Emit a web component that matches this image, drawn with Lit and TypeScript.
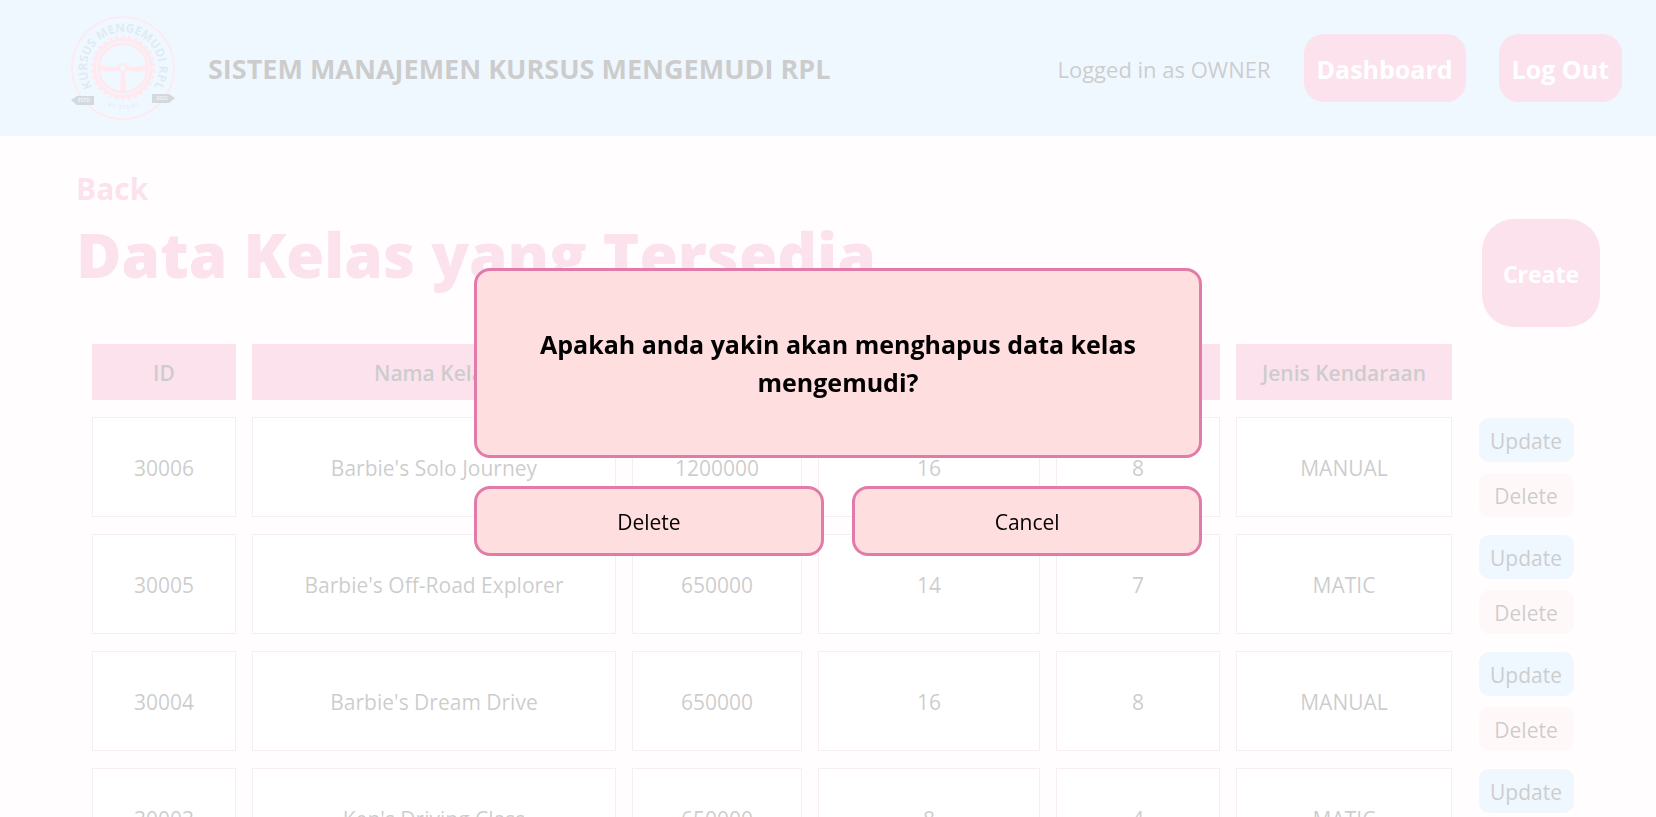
import { LitElement, html, css, svg } from "lit";
import { customElement, property } from "lit/decorators.js";

interface Kelas {
  id: number;
  nama: string;
  harga: number;
  jam: number;
  pertemuan: number;
  jenis: string;
}

const DAFTAR_KELAS: Kelas[] = [
  { id: 30006, nama: "Barbie's Solo Journey", harga: 1200000, jam: 16, pertemuan: 8, jenis: "MANUAL" },
  { id: 30005, nama: "Barbie's Off-Road Explorer", harga: 650000, jam: 14, pertemuan: 7, jenis: "MATIC" },
  { id: 30004, nama: "Barbie's Dream Drive", harga: 650000, jam: 16, pertemuan: 8, jenis: "MANUAL" },
  { id: 30003, nama: "Ken's Driving Class", harga: 650000, jam: 8, pertemuan: 4, jenis: "MATIC" },
];

const GERIGI = Array.from({ length: 30 }, (_, i) => i * 12);

@customElement("kursus-logo")
export class KursusLogo extends LitElement {
  static styles = css`
    :host { display: block; width: 104px; height: 104px; flex: none; }
    .logo { display: block; width: 100%; height: 100%; overflow: visible; }
    .ring { fill: none; stroke: #ff8fb0; }
    .solid { fill: #ff8fb0; }
    .name { font: 700 12px "Open Sans", sans-serif; fill: #5a9cbc; }
    .small { font: 600 5px "Open Sans", sans-serif; fill: #5a9cbc; }
    .flag { fill: #303c58; }
    .flag-text { font: 700 5px "Open Sans", sans-serif; fill: #afc3e0; text-anchor: middle; }
  `;

  render() {
    return html`
      <svg class="logo" viewBox="-52 -52 104 104" role="img" aria-label="Kursus Mengemudi RPL">
        <defs>
          <path id="top" d="M-31.8 16.9 A36 36 0 1 1 31.8 16.9" />
          <path id="bottom" d="M-30 28 A41 41 0 0 0 30 28" />
        </defs>
        <circle class="ring" r="51" stroke-width="1.6" />
        ${GERIGI.map((a) => svg`<rect class="solid" x="-1.6" y="-32.5" width="3.2" height="5" rx="1" transform="rotate(${a})" />`)}
        <circle class="ring" r="28.4" stroke-width="3" />
        <circle class="ring" r="24.4" stroke-width="2.8" />
        <circle class="ring" r="4" stroke-width="2.4" />
        <path class="solid" d="M-24 -4 Q-14 1 -4 -2 V2 Q-12 5 -24 2 Z M24 -4 Q14 1 4 -2 V2 Q12 5 24 2 Z M-2 4 H2 L3 24 H-3 Z" />
        <text class="name"><textPath href="#top" startOffset="50%" text-anchor="middle">KURSUS MENGEMUDI RPL</textPath></text>
        <text class="small"><textPath href="#bottom" startOffset="50%" text-anchor="middle">B Y ' S T E M I</textPath></text>
        <path class="flag" d="M-52 32 L-46 28 H-29 V37 H-46 Z" />
        <path class="flag" d="M52 30 L46 26 H29 V35 H46 Z" />
        <text class="flag-text" x="-39" y="34">ESTD</text>
        <text class="flag-text" x="39" y="32">2023</text>
      </svg>
    `;
  }
}

@customElement("site-header")
export class SiteHeader extends LitElement {
  @property() peran = "OWNER";

  static styles = css`
    :host { display: block; }
    .bar { display: flex; align-items: center; gap: 33px; min-height: 136px; padding: 0 34px 0 71px; background: #afd7ff; box-sizing: border-box; }
    .title { margin: 0; padding-top: 2px; font-size: 27px; font-weight: 700; line-height: 36px; }
    .who { margin-left: auto; padding-top: 2px; font-size: 22px; line-height: 30px; }
    .pill { height: 68px; padding: 2px 13px 0; border: 0; border-radius: 20px; background: #eb6ea5; color: #fff; font: inherit; font-size: 25px; font-weight: 700; }
  `;

  render() {
    return html`
      <header class="bar">
        <kursus-logo></kursus-logo>
        <h2 class="title">SISTEM MANAJEMEN KURSUS MENGEMUDI RPL</h2>
        <span class="who">Logged in as ${this.peran}</span>
        <button class="pill" type="button">Dashboard</button>
        <button class="pill" type="button">Log Out</button>
      </header>
    `;
  }
}

@customElement("kelas-table")
export class KelasTable extends LitElement {
  @property({ attribute: false }) rows: Kelas[] = [];

  static styles = css`
    :host { display: block; }
    .grid { width: 100%; table-layout: fixed; border-collapse: separate; border-spacing: 16px 17px; font-size: 21px; line-height: 28px; }
    .c-id { width: 144px; }
    .c-nama { width: 364px; }
    .c-harga { width: 170px; }
    .c-jam { width: 222px; }
    .c-temu { width: 164px; }
    .c-jenis { width: 216px; }
    .c-aksi { width: 116px; }
    .head { height: 56px; padding: 2px 0 0; box-sizing: border-box; background: #eb6ea5; font-weight: 600; }
    .cell { height: 100px; padding: 2px 0 0; box-sizing: border-box; border: 1px solid #d2aac3; background: #fff; text-align: center; }
    .aksi { padding: 0; }
    .stack { display: flex; flex-direction: column; align-items: center; gap: 11px; }
    .act { width: 95px; height: 44px; padding: 2px 0 0; border: 0; border-radius: 10px; font: inherit; color: #000; }
    .update { background: #afd7ff; }
    .delete { background: #ffdddd; }
  `;

  render() {
    return html`
      <table class="grid">
        <colgroup>
          <col class="c-id" /><col class="c-nama" /><col class="c-harga" /><col class="c-jam" />
          <col class="c-temu" /><col class="c-jenis" /><col class="c-aksi" />
        </colgroup>
        <thead>
          <tr>
            <th class="head">ID</th>
            <th class="head">Nama Kelas</th>
            <th class="head"></th>
            <th class="head"></th>
            <th class="head"></th>
            <th class="head">Jenis Kendaraan</th>
            <td></td>
          </tr>
        </thead>
        <tbody>
          ${this.rows.map(
            (k) => html`
              <tr>
                <td class="cell">${k.id}</td>
                <td class="cell">${k.nama}</td>
                <td class="cell">${k.harga}</td>
                <td class="cell">${k.jam}</td>
                <td class="cell">${k.pertemuan}</td>
                <td class="cell">${k.jenis}</td>
                <td class="aksi">
                  <div class="stack">
                    <button class="act update" type="button">Update</button>
                    <button class="act delete" type="button">Delete</button>
                  </div>
                </td>
              </tr>
            `,
          )}
        </tbody>
      </table>
    `;
  }
}

@customElement("confirm-dialog")
export class ConfirmDialog extends LitElement {
  static styles = css`
    :host { position: fixed; inset: 0; display: flex; align-items: center; justify-content: center; padding: 7px 0 0 20px; box-sizing: border-box; background: rgba(255, 255, 255, 0.8); }
    .dialog { display: grid; grid-template-columns: 1fr 1fr; gap: 28px; width: 44vw; }
    .message { grid-column: 1 / -1; margin: 0; padding: 54px 48px; border: 3px solid #e37ba9; border-radius: 16px; background: #ffdedf; text-align: center; font-size: 25px; font-weight: 700; line-height: 38px; }
    .choice { height: 70px; padding: 2px 0 0; border: 3px solid #e37ba9; border-radius: 16px; background: #ffdedf; color: #000; font: inherit; font-size: 21px; }
  `;

  render() {
    return html`
      <div class="dialog" role="alertdialog" aria-modal="true" aria-labelledby="pesan">
        <p class="message" id="pesan">Apakah anda yakin akan menghapus data kelas mengemudi?</p>
        <button class="choice" type="button">Delete</button>
        <button class="choice" type="button">Cancel</button>
      </div>
    `;
  }
}

@customElement("app-root")
export class AppRoot extends LitElement {
  static styles = css`
    :host { display: block; height: 100vh; overflow: hidden; background: #fff3f8; color: #000; font-family: "Open Sans", "Noto Sans", sans-serif; }
    .content { padding: 33px 56px 0 76px; }
    .back { display: inline-block; color: #eb6ea5; font-size: 30px; font-weight: 700; line-height: 40px; text-decoration: none; }
    .top { display: flex; align-items: flex-start; justify-content: space-between; }
    .heading { margin: 0; color: #eb6ea5; font-size: 62px; font-weight: 800; line-height: 90px; }
    .create { width: 118px; height: 108px; margin-top: 10px; padding: 2px 0 0; border: 0; border-radius: 32px; background: #eb6ea5; color: #fff; font: inherit; font-size: 23px; font-weight: 700; }
  `;

  render() {
    return html`
      <site-header></site-header>
      <main class="content">
        <a class="back" href="#">Back</a>
        <div class="top">
          <h1 class="heading">Data Kelas yang Tersedia</h1>
          <button class="create" type="button">Create</button>
        </div>
        <kelas-table .rows=${DAFTAR_KELAS}></kelas-table>
      </main>
      <confirm-dialog></confirm-dialog>
    `;
  }
}
